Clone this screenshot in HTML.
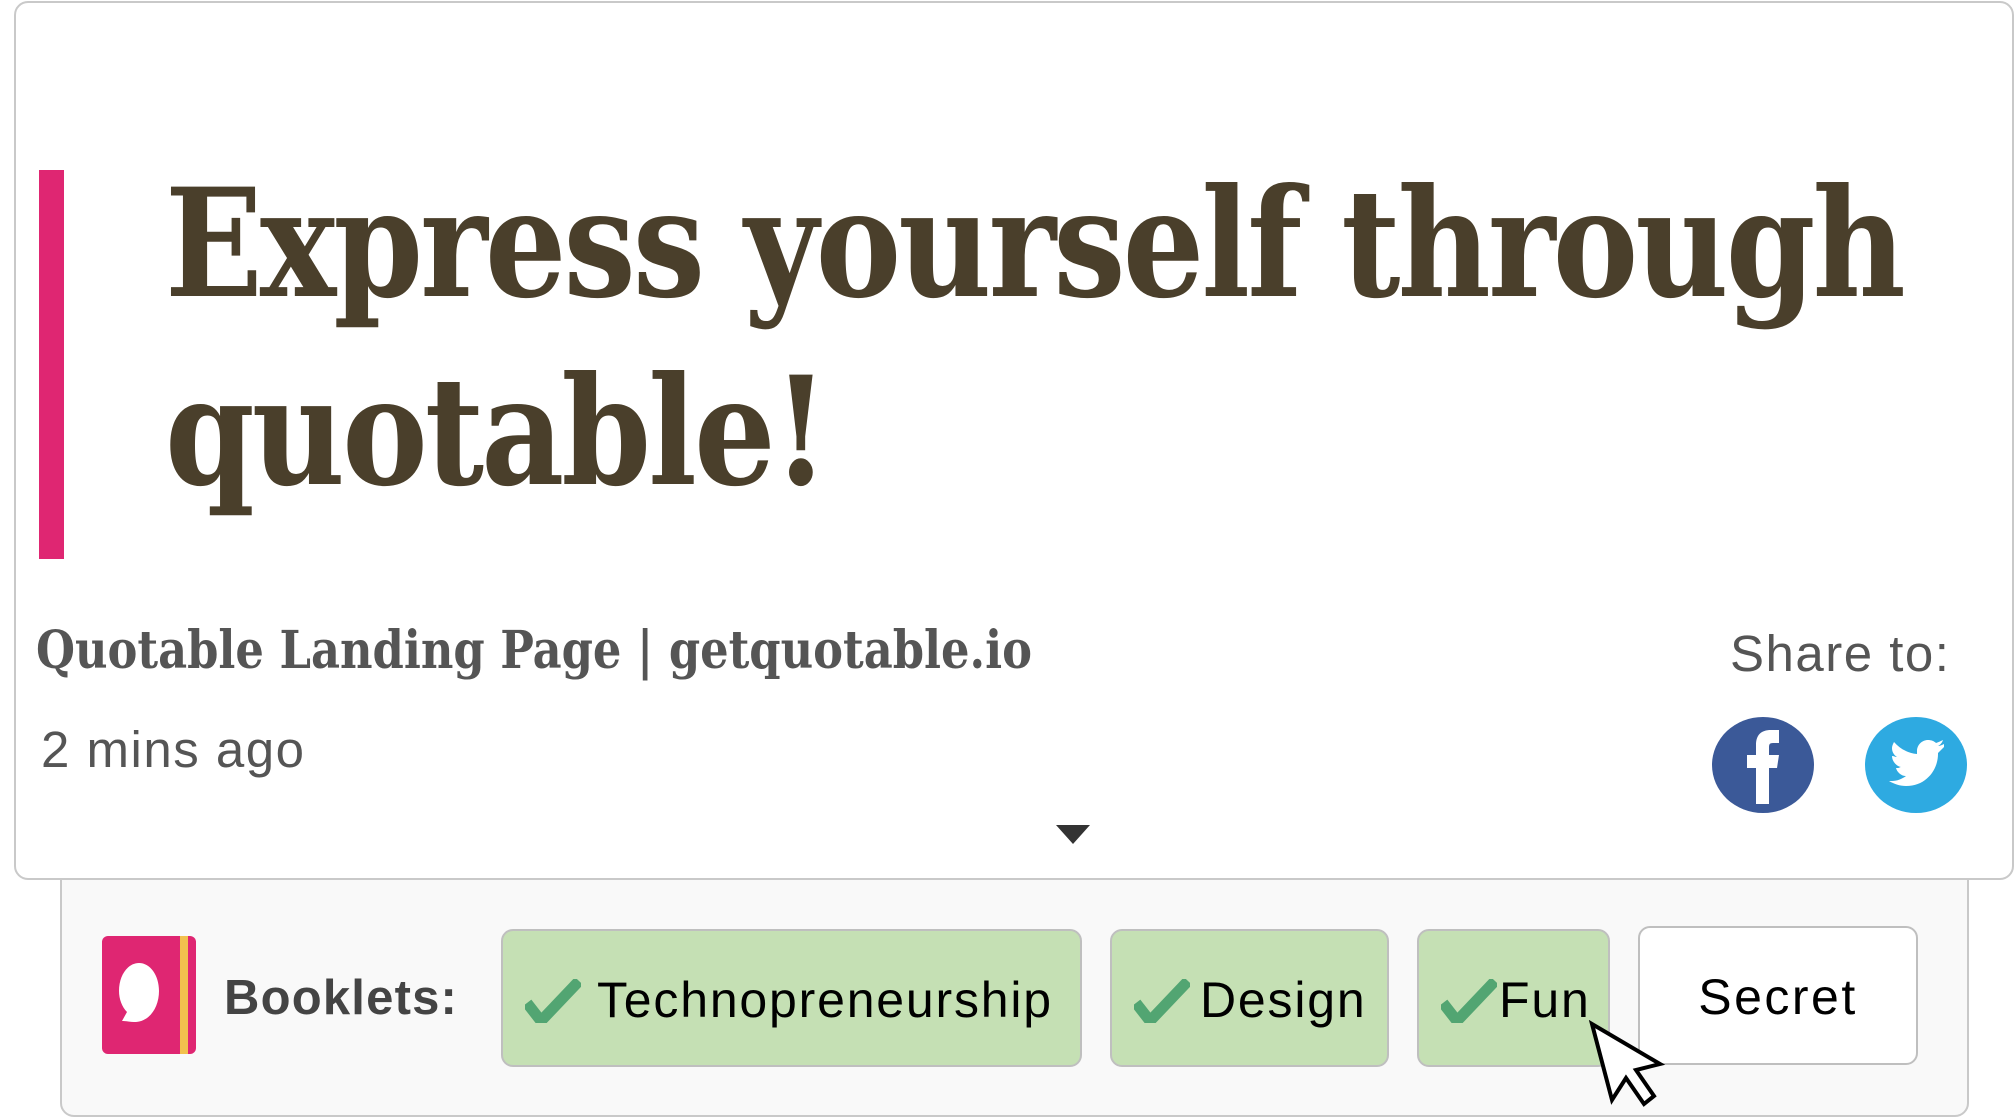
<!DOCTYPE html>
<html><head><meta charset="utf-8"><style>
html,body{margin:0;padding:0;background:#fff;width:2015px;height:1117px;overflow:hidden;position:relative;font-family:"Liberation Sans",sans-serif}
.card{position:absolute;left:14px;top:1px;width:1996px;height:875px;border:2px solid #c9c9c9;border-radius:14px;background:#fff;z-index:2}
.bar{position:absolute;left:39px;top:170px;width:25px;height:389px;background:#df2672;z-index:3}
.title{position:absolute;left:165px;top:150px;font-family:"DejaVu Serif",serif;font-weight:bold;font-stretch:condensed;font-size:150px;line-height:188px;color:#4a3f2b;z-index:3;transform-origin:0 0;transform:scaleX(0.95);white-space:nowrap;letter-spacing:-3px}
.src{position:absolute;left:36px;top:620px;font-family:"DejaVu Serif",serif;font-weight:bold;font-stretch:condensed;font-size:52px;color:#555;z-index:3;transform-origin:0 0;transform:scaleX(0.957);white-space:nowrap}
.ago{position:absolute;left:41px;top:720px;font-size:51px;letter-spacing:1.5px;color:#555;z-index:3}
.share{position:absolute;left:1730px;top:624px;font-size:51px;color:#555;z-index:3;letter-spacing:1.5px}
.ic{position:absolute;z-index:3}
.tri{position:absolute;left:1056px;top:825px;width:0;height:0;border-left:17px solid transparent;border-right:17px solid transparent;border-top:19px solid #333;z-index:3}
.panel{position:absolute;left:60px;top:860px;width:1905px;height:253px;border:2px solid #c9c9c9;border-radius:14px;background:#f9f9f9;z-index:1}
.bk{position:absolute;left:224px;top:970px;font-size:49px;font-weight:bold;color:#444;z-index:3;letter-spacing:1.2px}
.chip{position:absolute;box-sizing:border-box;border:2px solid #bfbfbf;border-radius:12px;background:#c5e0b4;z-index:3;font-size:50px;color:#000;line-height:138px;white-space:nowrap;letter-spacing:1.8px}
.chip svg{position:absolute;left:22px;top:48px}
.chip span{position:absolute;top:0}
</style></head><body>
<div class="card"></div>
<div class="bar"></div>
<div class="title">Express yourself through<br>quotable!</div>
<div class="src">Quotable Landing Page | getquotable.io</div>
<div class="ago">2 mins ago</div>
<div class="share">Share to:</div>
<svg class="ic" style="left:1711px;top:716px" width="104" height="98" viewBox="0 0 104 98"><ellipse cx="52" cy="49" rx="51" ry="48" fill="#3b5998"/><path d="M45 88V52H36V39H45V29C45 19 50 14 60 14H68V27H62C58 27 58 29 58 32V39H68L66 52H58V88Z" fill="#fff"/></svg>
<svg class="ic" style="left:1864px;top:716px" width="104" height="98" viewBox="0 0 104 98"><ellipse cx="52" cy="49" rx="51" ry="48" fill="#2eaae1"/><path d="M80 28c-2 1-4 2-6 2 2-1 4-3 5-6-2 1-4 2-7 3-2-2-5-3-8-3-6 0-11 5-11 11 0 1 0 2 0 3-9-1-17-5-23-12-1 2-2 4-2 6 0 4 2 7 5 9-2 0-3-1-5-1 0 5 4 10 9 11-1 0-2 1-3 1h-2c1 4 5 8 10 8-4 3-9 5-14 5h-3c5 3 11 5 17 5 21 0 32-17 32-32v-1c2-2 4-4 6-6z" fill="#fff"/></svg>
<div class="tri"></div>
<div class="panel"></div>
<svg class="ic" style="left:102px;top:936px" width="94" height="118" viewBox="0 0 94 118"><rect x="0" y="0" width="94" height="118" rx="6" fill="#df2672"/><rect x="78" y="0" width="8" height="118" fill="#f2c14e"/><path d="M20 85l5-9c-5-5-8-13-8-21 0-16 9-28 20-28s20 12 20 28-9 30-23 31c-5 0-10-1-14-1z" fill="#fff"/></svg>
<div class="bk">Booklets:</div>
<div class="chip" style="left:501px;top:929px;width:581px;height:138px"><svg width="56" height="44" viewBox="0 0 56 44"><path d="M2 24l14 18 38-40" fill="none" stroke="#52a572" stroke-width="11"/></svg><span style="left:94px">Technopreneurship</span></div>
<div class="chip" style="left:1110px;top:929px;width:279px;height:138px"><svg width="56" height="44" viewBox="0 0 56 44"><path d="M2 24l14 18 38-40" fill="none" stroke="#52a572" stroke-width="11"/></svg><span style="left:88px">Design</span></div>
<div class="chip" style="left:1417px;top:929px;width:193px;height:138px"><svg width="56" height="44" viewBox="0 0 56 44"><path d="M2 24l14 18 38-40" fill="none" stroke="#52a572" stroke-width="11"/></svg><span style="left:80px">Fun</span></div>
<div class="chip" style="left:1638px;top:926px;width:280px;height:139px;background:#fff;text-align:center;letter-spacing:2.5px"><span style="left:0;right:0">Secret</span></div>
<svg class="ic" style="left:1588px;top:1020px;z-index:5" width="80" height="88" viewBox="0 0 80 88"><path d="M4 4L24 80 38 58 56 84 66 76 48 50 72 44Z" fill="#fff" stroke="#000" stroke-width="4" stroke-linejoin="miter"/></svg>
</body></html>
